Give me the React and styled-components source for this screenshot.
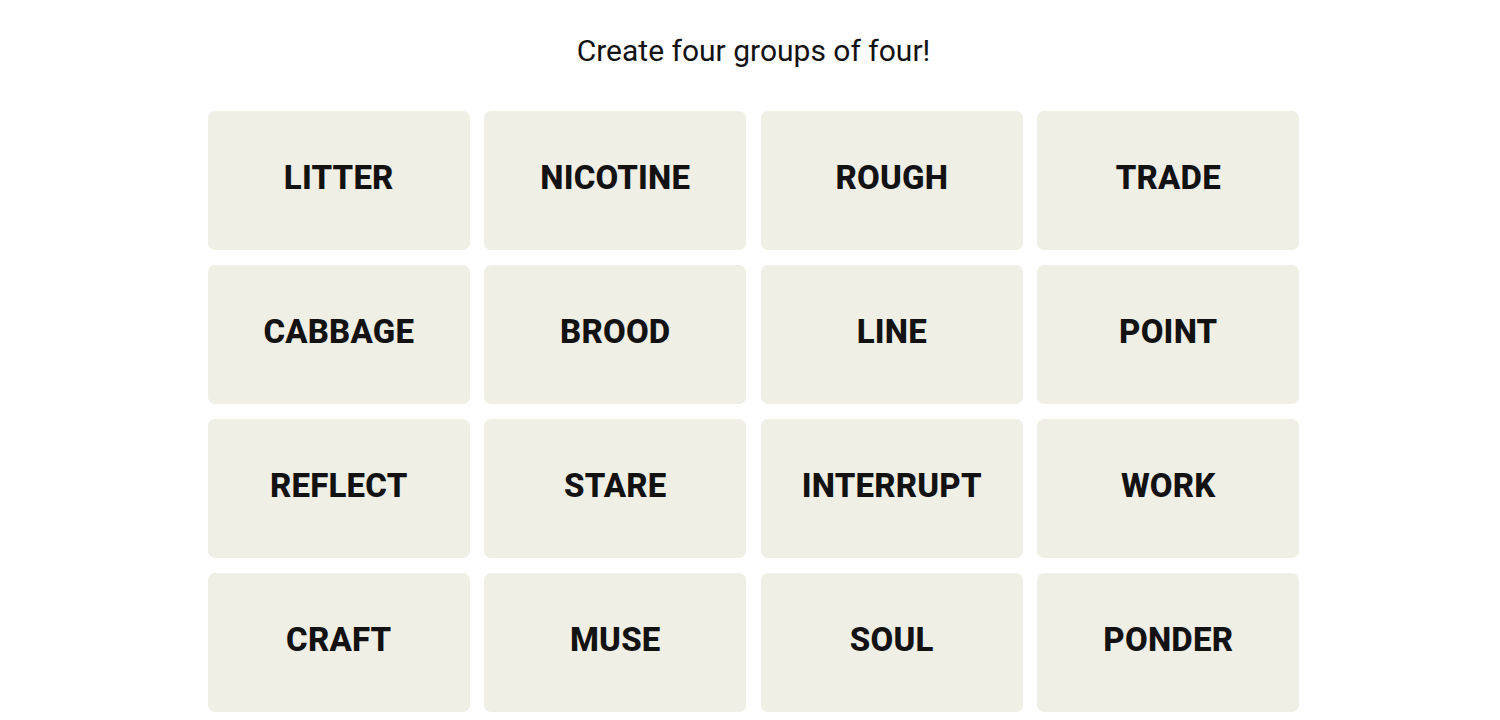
import React from "react";
import styled, { createGlobalStyle } from "styled-components";

const words = [
  "LITTER", "NICOTINE", "ROUGH", "TRADE",
  "CABBAGE", "BROOD", "LINE", "POINT",
  "REFLECT", "STARE", "INTERRUPT", "WORK",
  "CRAFT", "MUSE", "SOUL", "PONDER",
];

const GlobalStyle = createGlobalStyle`
  body {
    margin: 0;
    background: #ffffff;
    font-family: "Roboto", "Liberation Sans", sans-serif;
    color: #121212;
  }
`;

function App() {
  return (
    <>
      <GlobalStyle />
      <Page>
        <Title>Create four groups of four!</Title>
        <Board>
          {words.map((w) => (
            <Tile key={w}>{w}</Tile>
          ))}
        </Board>
      </Page>
    </>
  );
}

const Page = styled.div`
  display: flex;
  flex-direction: column;
  align-items: center;
  padding-left: 7px;
  padding-top: 32px;
`;

const Title = styled.h2`
  margin: 0;
  font-size: 30px;
  font-weight: 400;
  line-height: 38px;
  letter-spacing: 0;
`;

const Board = styled.div`
  margin-top: 41px;
  display: grid;
  grid-template-columns: repeat(4, 262px);
  grid-auto-rows: 139px;
  column-gap: 14.5px;
  row-gap: 15px;
`;

const Tile = styled.div`
  display: flex;
  align-items: center;
  justify-content: center;
  padding-bottom: 6px;
  background: #efefe6;
  border-radius: 7px;
  font-size: 33px;
  font-weight: 800;
  letter-spacing: 0.2px;
  color: #121212;
`;

export default App;
